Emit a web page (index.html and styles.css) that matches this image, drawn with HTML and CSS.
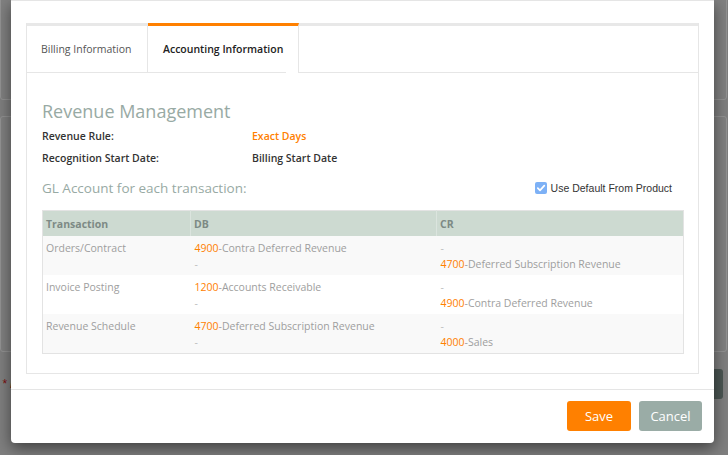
FILE: index.html
```html
<!DOCTYPE html>
<html>
<head>
<meta charset="utf-8">
<link rel="stylesheet" href="styles.css">
</head>
<body>
<div class="page">
  <div class="panel panel-a"></div>
  <div class="panel panel-b"></div>
  <div class="page-row">
    <span class="req">* Required fields</span>
    <span class="page-btn"></span>
  </div>
</div>

<div class="modal">
  <div class="modal-body">
    <div class="tabbox">
      <div class="tabs">
        <div class="tab">Billing Information</div>
        <div class="tab active">Accounting Information</div>
      </div>
      <div class="pane">
        <h2 class="title">Revenue Management</h2>
        <div class="rules">
          <div>Revenue Rule:</div><div class="orange">Exact Days</div>
          <div>Recognition Start Date:</div><div>Billing Start Date</div>
        </div>
        <div class="gl-head">
          <span class="subtitle">GL Account for each transaction:</span>
          <label class="chk"><span class="box"><svg width="10" height="10" viewBox="0 0 10 10"><path d="M1.8 5.2 L4 7.4 L8.3 2.6" fill="none" stroke="#fff" stroke-width="1.7" stroke-linecap="round" stroke-linejoin="round"/></svg></span>Use Default From Product</label>
        </div>
        <table class="gl">
          <colgroup><col class="c1"><col class="c2"><col></colgroup>
          <thead>
            <tr><th>Transaction</th><th>DB</th><th>CR</th></tr>
          </thead>
          <tbody>
            <tr>
              <td>Orders/Contract</td>
              <td><span class="num">4900</span>-Contra Deferred Revenue<br><span class="dash">-</span></td>
              <td><span class="dash">-</span><br><span class="num">4700</span>-Deferred Subscription Revenue</td>
            </tr>
            <tr>
              <td>Invoice Posting</td>
              <td><span class="num">1200</span>-Accounts Receivable<br><span class="dash">-</span></td>
              <td><span class="dash">-</span><br><span class="num">4900</span>-Contra Deferred Revenue</td>
            </tr>
            <tr>
              <td>Revenue Schedule</td>
              <td><span class="num">4700</span>-Deferred Subscription Revenue<br><span class="dash">-</span></td>
              <td><span class="dash">-</span><br><span class="num">4000</span>-Sales</td>
            </tr>
          </tbody>
        </table>
      </div>
    </div>
  </div>
  <div class="modal-footer">
    <button class="btn save">Save</button>
    <button class="btn cancel">Cancel</button>
  </div>
</div>
</body>
</html>
```

FILE: styles.css
```css
html, body {
  margin: 0;
  padding: 0;
}
body {
  width: 728px;
  height: 455px;
  overflow: hidden;
  position: relative;
  background: #7f7f7f;
  font-family: "Open Sans", "Noto Sans", sans-serif;
}

/* page behind the backdrop */
.page {
  padding: 0 1px 0 0;
}
.panel {
  border: 1px solid #939393;
  border-radius: 3px;
  background: #818181;
}
.panel-a {
  height: 108px;
  margin-top: -10px;
}
.panel-b {
  height: 234px;
  margin-top: 16px;
}
.page-row {
  display: flex;
  justify-content: space-between;
  align-items: center;
  height: 30px;
  margin-top: 17px;
  padding: 0 4px 0 2px;
}
.req {
  color: #7d0f0f;
  font-size: 12px;
  font-style: italic;
  font-family: "Liberation Sans", Arial, sans-serif;
}
.page-btn {
  width: 80px;
  height: 30px;
  border-radius: 3px;
  background: #4b5653;
}

/* modal */
.modal {
  position: absolute;
  left: 11px;
  top: 0;
  width: 703px;
  background: #fff;
  border-radius: 0 0 4px 4px;
  box-shadow: 0 5px 15px rgba(0, 0, 0, 0.5);
}
.modal-body {
  border-top: 1px solid #e5e5e5;
  padding: 22px 15px 15px 15px;
}
.tabbox {
  border: 1px solid #e6e6e6;
  border-top: 0;
}
.tabs {
  display: flex;
  height: 46px;
  border-top: 3px solid #e8e8e8;
  border-bottom: 1px solid #e6e6e6;
}
.tab {
  display: flex;
  align-items: center;
  font-size: 10.5px;
  color: #555;
  border-right: 1px solid #e6e6e6;
  width: 106px;
  padding-left: 14px;
}
.tab.active {
  position: relative;
  margin-top: -3px;
  border-top: 3px solid #ff8000;
  color: #222;
  font-weight: 600;
  width: 135px;
  padding-left: 15px;
}
.tab.active::after {
  content: "";
  position: absolute;
  right: 0;
  bottom: -1px;
  width: 12px;
  height: 1px;
  background: #fff;
}
.pane {
  padding: 26px 14px 19px 15px;
}
.title {
  margin: 0 0 2px;
  font-size: 18px;
  font-weight: 400;
  line-height: 24px;
  color: #98aaa4;
}
.rules {
  display: grid;
  grid-template-columns: 210px auto;
  font-size: 10.5px;
  line-height: 22px;
  font-weight: 600;
  color: #333;
}
.orange {
  color: #ff8000;
}
.gl-head {
  display: flex;
  justify-content: space-between;
  align-items: center;
  height: 20px;
  margin-top: 9px;
  padding-right: 12px;
}
.subtitle {
  font-size: 13.5px;
  color: #98aaa4;
}
.chk {
  display: flex;
  align-items: center;
  gap: 4px;
  font-family: "Liberation Sans", Arial, sans-serif;
  font-size: 10.5px;
  color: #333;
}
.box {
  display: flex;
  align-items: center;
  justify-content: center;
  width: 12px;
  height: 12px;
  border-radius: 2px;
  background: #7db1f6;
}
.gl {
  width: 100%;
  margin-top: 12px;
  border-collapse: collapse;
  border: 1px solid #e3e3e3;
  font-size: 10.5px;
}
.gl .c1 {
  width: 148px;
}
.gl .c2 {
  width: 246px;
}
.gl th {
  height: 25px;
  padding: 0 3px;
  text-align: left;
  background: #cddad1;
  color: #7d8a85;
  font-weight: 700;
  border-left: 1px solid #dbe4de;
}
.gl th:first-child {
  border-left: 0;
}
.gl td {
  padding: 4px 3px 3px;
  line-height: 16px;
  color: #9e9e9e;
  vertical-align: top;
}
.gl td + td {
  padding-left: 4px;
}
.gl tbody tr:nth-child(odd) td {
  background: #f9f9f9;
}
.num {
  color: #ff8000;
}
.dash {
  color: #bdbdbd;
}

.modal-footer {
  display: flex;
  justify-content: flex-end;
  gap: 8px;
  border-top: 1px solid #e5e5e5;
  padding: 11px 12px 12px;
}
.btn {
  height: 30px;
  border: 0;
  border-radius: 3px;
  color: #fff;
  font-family: "Open Sans", "Noto Sans", sans-serif;
  font-size: 13px;
  padding: 0;
}
.save {
  width: 64px;
  background: #ff8000;
}
.cancel {
  width: 63px;
  background: #9aaca6;
}
```
